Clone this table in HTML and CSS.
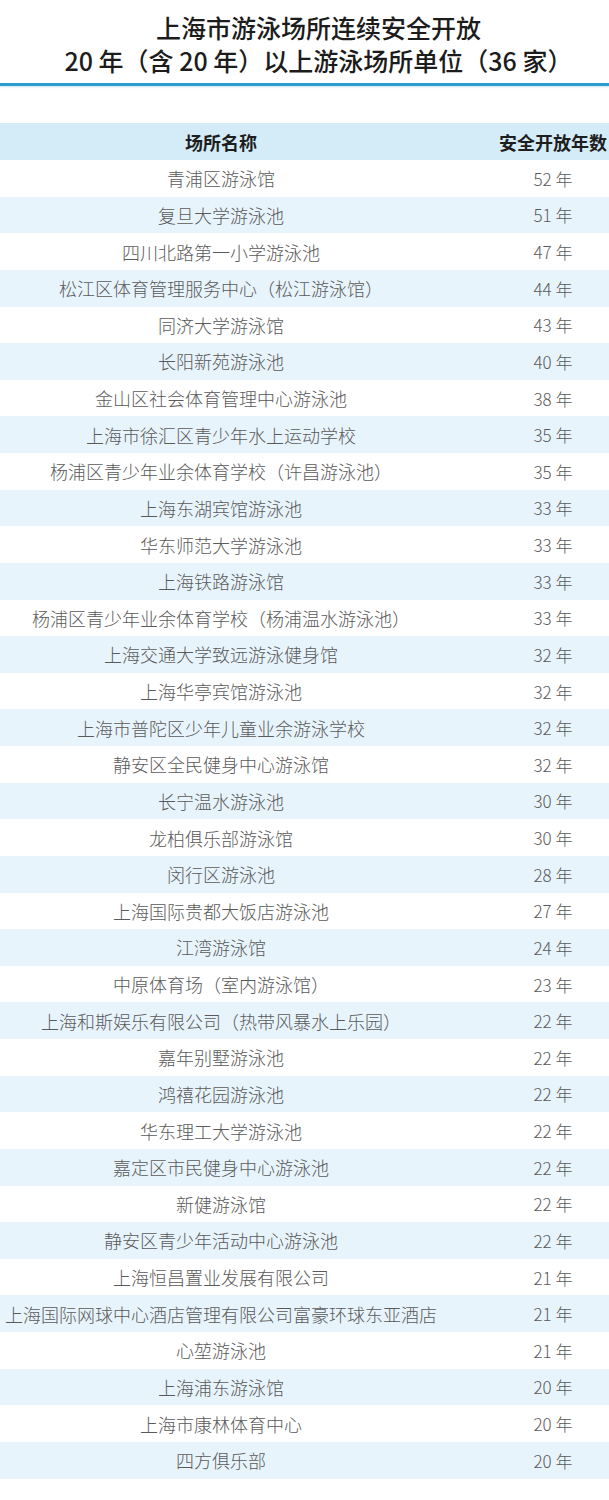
FILE: index.html
```html
<!DOCTYPE html>
<html lang="zh-CN">
<head>
<meta charset="utf-8">
<title>上海市游泳场所连续安全开放20年以上游泳场所单位</title>
<link rel="stylesheet" href="styles.css">
</head>
<body>
<div class="page">
  <h1 class="title">
    <span class="line">上海市游泳场所连续安全开放</span>
    <span class="line">20 年（含 20 年）以上游泳场所单位（36 家）</span>
  </h1>
  <div class="rule"></div>
  <div class="table-wrap">
    <div class="table">
      <div class="row head"><div class="c-name">场所名称</div><div class="c-year">安全开放年数</div></div>
      <div class="row"><div class="c-name">青浦区游泳馆</div><div class="c-year">52 年</div></div>
      <div class="row alt"><div class="c-name">复旦大学游泳池</div><div class="c-year">51 年</div></div>
      <div class="row"><div class="c-name">四川北路第一小学游泳池</div><div class="c-year">47 年</div></div>
      <div class="row alt"><div class="c-name">松江区体育管理服务中心（松江游泳馆）</div><div class="c-year">44 年</div></div>
      <div class="row"><div class="c-name">同济大学游泳馆</div><div class="c-year">43 年</div></div>
      <div class="row alt"><div class="c-name">长阳新苑游泳池</div><div class="c-year">40 年</div></div>
      <div class="row"><div class="c-name">金山区社会体育管理中心游泳池</div><div class="c-year">38 年</div></div>
      <div class="row alt"><div class="c-name">上海市徐汇区青少年水上运动学校</div><div class="c-year">35 年</div></div>
      <div class="row"><div class="c-name">杨浦区青少年业余体育学校（许昌游泳池）</div><div class="c-year">35 年</div></div>
      <div class="row alt"><div class="c-name">上海东湖宾馆游泳池</div><div class="c-year">33 年</div></div>
      <div class="row"><div class="c-name">华东师范大学游泳池</div><div class="c-year">33 年</div></div>
      <div class="row alt"><div class="c-name">上海铁路游泳馆</div><div class="c-year">33 年</div></div>
      <div class="row"><div class="c-name">杨浦区青少年业余体育学校（杨浦温水游泳池）</div><div class="c-year">33 年</div></div>
      <div class="row alt"><div class="c-name">上海交通大学致远游泳健身馆</div><div class="c-year">32 年</div></div>
      <div class="row"><div class="c-name">上海华亭宾馆游泳池</div><div class="c-year">32 年</div></div>
      <div class="row alt"><div class="c-name">上海市普陀区少年儿童业余游泳学校</div><div class="c-year">32 年</div></div>
      <div class="row"><div class="c-name">静安区全民健身中心游泳馆</div><div class="c-year">32 年</div></div>
      <div class="row alt"><div class="c-name">长宁温水游泳池</div><div class="c-year">30 年</div></div>
      <div class="row"><div class="c-name">龙柏俱乐部游泳馆</div><div class="c-year">30 年</div></div>
      <div class="row alt"><div class="c-name">闵行区游泳池</div><div class="c-year">28 年</div></div>
      <div class="row"><div class="c-name">上海国际贵都大饭店游泳池</div><div class="c-year">27 年</div></div>
      <div class="row alt"><div class="c-name">江湾游泳馆</div><div class="c-year">24 年</div></div>
      <div class="row"><div class="c-name">中原体育场（室内游泳馆）</div><div class="c-year">23 年</div></div>
      <div class="row alt"><div class="c-name">上海和斯娱乐有限公司（热带风暴水上乐园）</div><div class="c-year">22 年</div></div>
      <div class="row"><div class="c-name">嘉年别墅游泳池</div><div class="c-year">22 年</div></div>
      <div class="row alt"><div class="c-name">鸿禧花园游泳池</div><div class="c-year">22 年</div></div>
      <div class="row"><div class="c-name">华东理工大学游泳池</div><div class="c-year">22 年</div></div>
      <div class="row alt"><div class="c-name">嘉定区市民健身中心游泳池</div><div class="c-year">22 年</div></div>
      <div class="row"><div class="c-name">新健游泳馆</div><div class="c-year">22 年</div></div>
      <div class="row alt"><div class="c-name">静安区青少年活动中心游泳池</div><div class="c-year">22 年</div></div>
      <div class="row"><div class="c-name">上海恒昌置业发展有限公司</div><div class="c-year">21 年</div></div>
      <div class="row alt"><div class="c-name">上海国际网球中心酒店管理有限公司富豪环球东亚酒店</div><div class="c-year">21 年</div></div>
      <div class="row"><div class="c-name">心堃游泳池</div><div class="c-year">21 年</div></div>
      <div class="row alt"><div class="c-name">上海浦东游泳馆</div><div class="c-year">20 年</div></div>
      <div class="row"><div class="c-name">上海市康林体育中心</div><div class="c-year">20 年</div></div>
      <div class="row alt"><div class="c-name">四方俱乐部</div><div class="c-year">20 年</div></div>
    </div>
  </div>
</div>
</body>
</html>
```
FILE: styles.css
```css
html, body {
  margin: 0;
  padding: 0;
  background: #ffffff;
}

.page {
  width: 609px;
  overflow: hidden;
  font-family: "Noto Sans CJK SC", "Noto Sans", sans-serif;
}

.title {
  margin: 0;
  padding: 11px 0 0 28px;
  display: flex;
  flex-direction: column;
  align-items: center;
  font-size: 25px;
  line-height: 33px;
  font-weight: 500;
  color: #1c1c1c;
  letter-spacing: 0;
}

.line {
  display: block;
  white-space: nowrap;
}

.rule {
  margin-top: 6px;
  height: 3px;
  background: #2e9dcd;
  box-shadow: 0 1px 2px rgba(46, 157, 205, 0.25);
}

.table-wrap {
  margin-top: 37px;
  width: 609px;
  overflow: hidden;
}

.table {
  width: 664px;
  display: flex;
  flex-direction: column;
}

.row {
  display: grid;
  grid-template-columns: 442px 222px;
  height: 36.63px;
  align-items: center;
  font-size: 18px;
  font-weight: 300;
  color: #5a5a5a;
  background: #ffffff;
}

.row.alt {
  background: #e8f4fc;
}

.row.head {
  height: 37px;
  background: #d4ecf8;
  color: #1e1e1e;
  font-weight: 700;
}

.c-name,
.c-year {
  text-align: center;
  white-space: nowrap;
}

.c-year {
  font-size: 17px;
}

.head .c-year {
  font-size: 18px;
}
```
